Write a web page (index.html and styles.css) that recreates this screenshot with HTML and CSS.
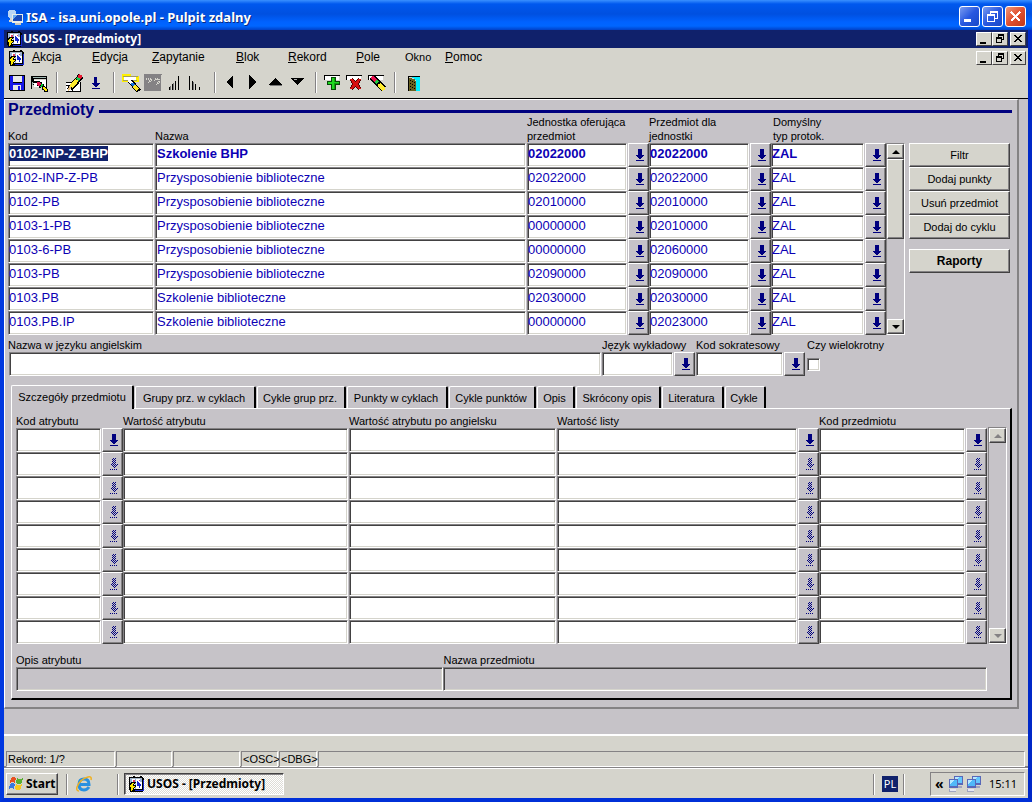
FILE: index.html
```html
<!DOCTYPE html>
<html lang="pl">
<head>
<meta charset="utf-8">
<title>USOS - [Przedmioty]</title>
<link rel="stylesheet" href="styles.css">
<script src="script.js" defer></script>
</head>
<body>
<svg class="defs" aria-hidden="true">
  <defs>
    <pattern id="dots" width="2" height="2" patternUnits="userSpaceOnUse"><path fill="#00007f" d="M0 0h1v1H0zM1 1h1v1H1z"/></pattern>
    <symbol id="list" viewBox="0 0 9 12"><path fill="#00007f" d="M3 0h4v6h2v1H8v1H7v1H6v1H4V9H3V8H2V7H1V6h2zM1 11h8v1H1z"/></symbol>
    <symbol id="list-off" viewBox="0 0 9 12"><path fill="url(#dots)" d="M3 0h4v6h2v1H8v1H7v1H6v1H4V9H3V8H2V7H1V6h2zM1 11h8v1H1z"/></symbol>
    <symbol id="usos" viewBox="0 0 16 16">
      <path fill="#000" d="M1 1h4V0h2v1h5V0h2v1h1v1h1v13h-1v1H5v-2H1z"/><path fill="#a5b6c8" d="M2 2h12v1H2z"/><path fill="#fff" d="M2 3h12v10H2z"/><path fill="#98b0d8" d="M7 3h1v10H7zM2 3h2v4H2zM12 3h2v3h-2z"/><path fill="#1828d0" d="M9 5h1v1h1v1h1v1h1v2h-1v2h-1v-2H9zM15 4h1v11H7v-1h8z"/><path fill="#e04060" d="M5 4h2v2H5zM11 4h1v1h-1z"/><path fill="#000" d="M3 6h5v1H7v1H6v1h2v2H7v1H6v2H5v2H2v-4H1V9h1V7h1z"/><path fill="#ffe800" d="M4 7h2v1H5v2h2v1H6v1H5v2H4v1H3v-4H2V9h1V8h1z"/>
    </symbol>
    <symbol id="min" viewBox="0 0 14 12"><path d="M3 9h6v2H3z"/></symbol>
    <symbol id="restore" viewBox="0 0 14 12"><path fill-rule="evenodd" d="M5 1h6v6H9v3H3V4h2zm1 2v1h3v2h1V3zM4 6v3h4V6z"/></symbol>
    <symbol id="close" viewBox="0 0 14 12"><path d="M3 2h2v1h1v1h2V3h1V2h2v1h-1v1H9v1H8v1h1v1h1v1h1v1H9V8H8V7H6v1H5v1H3V8h1V7h1V6h1V5H5V4H4V3H3z"/></symbol>
    <symbol id="net" viewBox="0 0 16 16"><path fill="#5868b8" d="M6 0h9v9H6z"/><path fill="#62c6ff" d="M7 1h7v6H7z"/><path fill="#b8e8ff" d="M7 1h4L7 5z"/><path fill="#a0a4c0" d="M8 10h6v2H8zM1 13h7v3H1z"/><path fill="#5868b8" d="M1 3h9v9H1z"/><path fill="#50b8f8" d="M2 4h7v6H2z"/><path fill="#b8e8ff" d="M2 4h4L2 8z"/><path fill="#e8e8f4" d="M2 13h6v2H2z"/></symbol>
    <symbol id="field" viewBox="0 0 20 18"><path fill="#000" d="M1 1h16v1H2v4H1z"/><path fill="#fff" d="M2 2h14v4H2z"/></symbol>
  </defs>
</svg>
<div class="window">
  <header class="rdp-bar">
    <svg class="i16" viewBox="0 0 16 16"><circle cx="5" cy="5" r="4.500" fill="#b8d4f4"/><path fill="#d8d8d0" d="M3 9h5v4H2z"/><path fill="#e8ece8" d="M5 5h11v9H5z"/><path fill="#1848b8" d="M6 6h9v6H6z"/><path fill="#68a8f0" d="M6 6h5L6 10z"/><path fill="#c8c8c0" d="M8 14h6v2H8z"/></svg>
    <span class="rdp-title">ISA - isa.uni.opole.pl - Pulpit zdalny</span>
    <button class="xp" aria-label="Minimalizuj pulpit"><svg viewBox="0 0 19 19"><path fill="#fff" d="M4 12h7v3H4z"/></svg></button>
    <button class="xp" aria-label="Przywróć pulpit"><svg viewBox="0 0 19 19"><path fill="#fff" fill-rule="evenodd" d="M7 4h8v8h-3v3H4V7h3zm1 2v1h4v4h2V6zM5 9v5h6V9z"/></svg></button>
    <button class="xp xp-close" aria-label="Zamknij pulpit"><svg viewBox="0 0 19 19"><path stroke="#fff" stroke-width="2.400" d="M5 5l9 9M14 5l-9 9"/></svg></button>
  </header>
  <div class="app-bar">
    <svg class="i16"><use href="#usos"/></svg>
    <span class="app-title">USOS - [Przedmioty]</span>
    <button class="wc" aria-label="Minimalizuj"><svg><use href="#min"/></svg></button><button class="wc" aria-label="Przywróć"><svg><use href="#restore"/></svg></button><button class="wc wc-close" aria-label="Zamknij"><svg><use href="#close"/></svg></button>
  </div>
  <div class="menu-row">
    <svg class="i16"><use href="#usos"/></svg>
    <nav class="menu">
      <button><u>A</u>kcja</button><button><u>E</u>dycja</button><button><u>Z</u>apytanie</button><button><u>B</u>lok</button><button><u>R</u>ekord</button><button><u>P</u>ole</button><button class="menu-sub">Okno</button><button><u>P</u>omoc</button>
    </nav>
    <button class="wc" aria-label="Minimalizuj formularz"><svg><use href="#min"/></svg></button><button class="wc" aria-label="Przywróć formularz"><svg><use href="#restore"/></svg></button><button class="wc wc-close" aria-label="Zamknij formularz"><svg><use href="#close"/></svg></button>
  </div>
  <div class="toolbar">
    <button aria-label="Zapisz"><svg viewBox="0 0 20 18"><path d="M2 1h16v16H3l-1-1z"/><path fill="#1818e8" d="M3 2h3v7h9V2h2v14H3z"/><path fill="#e8e8e8" d="M6 2h9v6H6zM6 11h8v5H6z"/><path fill="#1818e8" d="M11 12h2v4h-2z"/></svg></button>
    <button aria-label="Wyświetl"><svg viewBox="0 0 20 18"><path d="M2 2h16v12h-1V5H5v2h3v1H4v2h2v1H3v4H2z"/><path fill="#a0b8b0" d="M4 3h13v1H4zM3 8h1v3H3z"/><path fill="#fff" d="M5 6h12v7H5z"/><path d="M4 7h7v1h2v2h2v2h-3v2h-2v-2H8V9H4z"/><path fill="#e01050" d="M8 8h3v1h1v2h-1v1H9v-1H8z"/><path fill="#00c030" d="M12 10h2v3h-3v-1h1z"/><path fill="#000" d="M13 12h3v1h2v2h1v3h-4v-2h-2z"/><path fill="#ffe800" d="M14 13h2v1h1v1h1v2h-2v-1h-1v-1h-1z"/></svg></button>
    <i class="sep"></i>
    <button aria-label="Edytuj"><svg viewBox="0 0 20 18"><path fill="#fff" d="M2 8h15v9H2z"/><path d="M2 8h6v1H2zM2 11h4v1H2zM3 14h4v1H3zM2 17h15v1H2zM16 8h1v9h-1z"/><path stroke="#000" stroke-width="6" d="M6 15L17 2"/><path stroke="#ffec30" stroke-width="4" d="M7 13l6-7"/><path stroke="#18c850" stroke-width="4" d="M13 6l2-2"/><path stroke="#e81830" stroke-width="4" d="M15 4l2-3"/><path fill="#e8c080" d="M5 12l3 2-4 3z"/></svg></button>
    <button aria-label="Lista wartości"><svg viewBox="0 0 20 18"><path fill="#00007f" d="M8 3h3v6h3l-4 4H9L5 9h3zM6 14h8v1H6z"/></svg></button>
    <i class="sep"></i>
    <button aria-label="Wprowadź zapytanie"><svg viewBox="0 0 20 18"><path fill="#fff000" d="M1 0h9v2h8v6H1z"/><path fill="#a09c60" d="M2 2h15v1H2zM2 6h14v1H2z"/><path fill="#fff" d="M3 3h12v3H3z"/><path stroke="#000" stroke-width="5" d="M9 7l9 10"/><path stroke="#fff" stroke-width="3" d="M8 6l3 4"/><path stroke="#1070e0" stroke-width="3" d="M11 9l2 3"/><path stroke="#ffe820" stroke-width="3" d="M13 12l4 4"/></svg></button>
    <button aria-label="Wykonaj zapytanie" disabled><svg viewBox="0 0 20 18"><path fill="#848284" d="M1 0h18v18H1z"/><path fill="#d5d4cc" d="M18 1h1v17H1v-1h17z"/><path fill="none" stroke="#d5d4cc" stroke-dasharray="1 1" stroke-width="2" d="M3 5h6M5 9l4-4M11 7l2-2h3v3l-3 3"/></svg></button>
    <button aria-label="Sortuj rosnąco"><svg viewBox="0 0 20 18"><path d="M4 13h1v3H4zM7 10h1v6H7zM10 7h1v9h-1zM13 2h1v14h-1z"/><path fill="#777" d="M5 12h1v4H5zM8 9h1v7H8z"/></svg></button>
    <button aria-label="Sortuj malejąco"><svg viewBox="0 0 20 18"><path d="M2 2h1v14H2zM5 7h1v9H5zM8 10h1v6H8zM12 13h1v3h-1z"/><path fill="#777" d="M6 8h1v8H6z"/></svg></button>
    <i class="sep"></i>
    <button aria-label="Poprzedni blok"><svg viewBox="0 0 20 18"><path d="M4 8l7-7v14z"/></svg></button>
    <button aria-label="Następny blok"><svg viewBox="0 0 20 18"><path d="M12 8L5 1v14z"/></svg></button>
    <button aria-label="Poprzedni rekord"><svg viewBox="0 0 20 18"><path d="M2 11l7-7 7 7z"/><path fill="#777" d="M4 11h12v1H4z"/></svg></button>
    <button aria-label="Następny rekord"><svg viewBox="0 0 20 18"><path d="M2 4h14l-7 7z"/><path fill="#aaa" d="M5 5h6l-5 1z"/></svg></button>
    <i class="sep"></i>
    <button aria-label="Wstaw rekord"><svg viewBox="0 0 20 18"><use href="#field"/><path fill="#084808" d="M8 3h5v4h4v4h-4v5H8v-5H4V7h4z"/><path fill="#20d820" d="M9 4h2v4h5v1h-5v6H9v-5H5V8h4z"/><path fill="#10a010" d="M11 4h1v4h-1zM11 9h5v1h-4v5h-1z"/></svg></button>
    <button aria-label="Usuń rekord"><svg viewBox="0 0 20 18"><use href="#field"/><path stroke="#500" stroke-width="4" d="M6 5l9 10M15 5L6 15"/><path stroke="#d81010" stroke-width="2.500" d="M6 5l9 10M15 5L6 15"/></svg></button>
    <button aria-label="Wyczyść rekord"><svg viewBox="0 0 20 18"><use href="#field"/><path stroke="#000" stroke-width="6" d="M5 3l12 12"/><path stroke="#e81050" stroke-width="4" d="M5 3l4 4"/><path stroke="#20c840" stroke-width="4" d="M9 7l2 2"/><path stroke="#ffec30" stroke-width="4" d="M12 10l5 6"/></svg></button>
    <i class="sep"></i>
    <button aria-label="Wyjście"><svg viewBox="0 0 20 18"><path d="M6 2h12v1H7v14H6z"/><path fill="#00eeff" d="M10 3h8v14h-4V6h-2V4h-2z"/><path fill="#686020" d="M7 4h3v1h3v2h1v10H7z"/><path d="M8 6h1v1H8zM10 7h1v1h-1zM12 8h1v1h-1zM8 9h1v1H8zM10 10h1v1h-1zM12 11h1v1h-1zM8 12h1v1H8zM10 13h1v1h-1zM12 14h1v1h-1zM8 15h1v1H8z"/></svg></button>
  </div>

  <main class="workspace">
    <div class="canvas">
      <h1>Przedmioty</h1>
      <section class="courses">
        <table class="grid course-grid">
          <colgroup><col class="c-code"><col><col class="c-unit"><col class="c-btn"><col class="c-unit"><col class="c-btn"><col class="c-type"><col class="c-btn"></colgroup>
          <thead><tr><th>Kod</th><th>Nazwa</th><th colspan="2">Jednostka oferująca<br>przedmiot</th><th colspan="2">Przedmiot dla<br>jednostki</th><th class="type" colspan="2">Domyślny<br>typ protok.</th></tr></thead>
          <tbody id="courses"></tbody>
        </table>
        <div class="scroll scroll-main"><button class="up" aria-label="W górę"></button><div class="thumb"></div><div class="track"></div><button class="down" aria-label="W dół"></button></div>
        <div class="actions"><button>Filtr</button><button>Dodaj punkty</button><button>Usuń przedmiot</button><button>Dodaj do cyklu</button><button class="reports">Raporty</button></div>
      </section>

      <section class="extra">
        <div class="ex ex-name"><label for="en">Nazwa w języku angielskim</label><div class="line"><input class="field" id="en"></div></div>
        <div class="ex ex-lang"><label for="lang">Język wykładowy</label><div class="line"><input class="field" id="lang"><button class="lov" aria-label="Lista języków"><svg><use href="#list"/></svg></button></div></div>
        <div class="ex ex-soc"><label for="soc">Kod sokratesowy</label><div class="line"><input class="field" id="soc"><button class="lov" aria-label="Lista kodów"><svg><use href="#list"/></svg></button></div></div>
        <div class="ex ex-multi"><label for="multi">Czy wielokrotny</label><div class="line"><input type="checkbox" id="multi"></div></div>
      </section>

      <div class="tabs" role="tablist">
        <button role="tab" class="active" aria-selected="true">Szczegóły przedmiotu</button><button role="tab">Grupy prz. w cyklach</button><button role="tab">Cykle grup prz.</button><button role="tab">Punkty w cyklach</button><button role="tab">Cykle punktów</button><button role="tab">Opis</button><button role="tab">Skrócony opis</button><button role="tab">Literatura</button><button role="tab">Cykle</button>
      </div>
      <section class="panel">
        <div class="attrs">
          <table class="grid">
            <colgroup><col class="a-code"><col class="c-btn"><col class="a-val"><col class="a-eng"><col><col class="c-btn"><col class="c-code"><col class="c-btn"></colgroup>
            <thead><tr><th colspan="2">Kod atrybutu</th><th>Wartość atrybutu</th><th>Wartość atrybutu po angielsku</th><th colspan="2">Wartość listy</th><th colspan="2">Kod przedmiotu</th></tr></thead>
            <tbody id="attrs"></tbody>
          </table>
          <div class="scroll scroll-attrs"><button class="up" aria-label="W górę" disabled></button><div class="track"></div><button class="down" aria-label="W dół" disabled></button></div>
        </div>
        <div class="descr">
          <div><label for="d1">Opis atrybutu</label><input class="field" id="d1" readonly></div>
          <div><label for="d2">Nazwa przedmiotu</label><input class="field" id="d2" readonly></div>
        </div>
      </section>
    </div>
  </main>

  <div class="status"><span>Rekord: 1/?</span><span></span><span></span><span>&lt;OSC&gt;</span><span>&lt;DBG&gt;</span><span></span></div>
  <footer class="taskbar">
    <button class="start"><svg class="i16" viewBox="0 0 16 16"><path fill="#e85020" d="M3 2q3-2 5 0L7 7Q5 5 2 7z"/><path fill="#58b030" d="M9 2q3 2 6 0l-1 5q-3 2-6 0z"/><path fill="#3878e0" d="M2 8q3-2 5 0l-1 5q-2-2-5 0z"/><path fill="#f8c820" d="M8 8q3 2 6 0l-1 5q-3 2-6 0z"/></svg>Start</button>
    <i class="sep"></i>
    <button class="ie" aria-label="Internet Explorer"><svg class="i16 smooth" viewBox="0 0 16 16"><path fill="none" stroke="#2890e0" stroke-width="3" d="M13 11q-2 3-5 3-5 0-5-5.500T8 3q5 0 5 5.500H4"/><path fill="none" stroke="#f0b020" stroke-width="1.500" d="M3 15q-3 0-2-4Q4 3 12 1q4-1 3 3"/></svg></button>
    <i class="sep"></i>
    <button class="task"><svg class="i16"><use href="#usos"/></svg>USOS - [Przedmioty]</button>
    <i class="sep tray-sep"></i>
    <span class="lang">PL</span>
    <i class="sep"></i>
    <div class="tray"><span class="more">«</span><svg class="i16"><use href="#net"/></svg><svg class="i16"><use href="#net"/></svg><time>15:11</time></div>
  </footer>
</div>
</body>
</html>
```

FILE: styles.css
```css
* { box-sizing: border-box; }
:root { --face: #d5d4cc; --form: #c6c3c8; --gray: #848284; --dark: #424142; --navy: #00007f; }
body { margin: 0; font: 11px/14px "Liberation Sans", Arial, sans-serif; color: #000; }
button, input { font: inherit; color: inherit; margin: 0; padding: 0; border: 0; border-radius: 0; background: none; outline: 0; min-width: 0; }
svg { display: block; fill: #000; shape-rendering: crispEdges; flex: none; }
.defs { position: absolute; width: 0; height: 0; }
.i16 { width: 16px; height: 16px; }
.smooth { shape-rendering: auto; }
.window { min-height: 100vh; display: flex; flex-direction: column; background: var(--face); border: solid; border-width: 0 4px 4px; border-color: #0038e0 #0028c8 #0030d8 #0038e0; }

.rdp-bar { height: 30px; margin: 0 -4px; padding: 3px 6px 0 7px; display: flex; align-items: center; gap: 2px; background: linear-gradient(#3a90ff, #0058ee 4px, #0050e0 14px, #0062ff 22px, #0066ff 26px, #0040c8); }
.rdp-title { flex: 1; padding-left: 1px; font: bold 13px/18px "Noto Sans", sans-serif; color: #fff; text-shadow: 1px 1px #0a2a80; white-space: nowrap; }
.xp { width: 21px; height: 21px; border: 1px solid #fff; border-radius: 3px; background: linear-gradient(135deg, #7a9cf0, #2858e0 50%, #1848c8); }
.xp svg { width: 19px; height: 19px; }
.xp-close { background: linear-gradient(135deg, #f09878, #e05030 50%, #c03818); }

.app-bar { height: 18px; padding: 0 2px; display: flex; align-items: center; background: #10216b; color: #fff; }
.app-title { flex: 1; padding-left: 1px; font: bold 12px/16px "Noto Sans", sans-serif; white-space: nowrap; }
.wc { width: 16px; height: 14px; background: var(--face); border: 1px solid; border-color: #fff var(--dark) var(--dark) #fff; }
.wc svg { width: 14px; height: 12px; }
.wc-close { margin-left: 2px; }
.menu-row { height: 21px; padding: 0 2px 2px; display: flex; align-items: center; }
.menu { flex: 1; padding: 0 0 2px 8px; display: grid; grid-template-columns: 60px 60px 84px 52px 68px 49px 40px 40px; font-size: 12px; }
.menu button { text-align: left; }
.menu .menu-sub { font-size: 11px; }
.menu-row .i16 { margin-left: 2px; }

.toolbar { height: 30px; padding: 0 2px 2px; display: flex; align-items: center; border-bottom: 1px solid #000; }
.toolbar button { width: 22px; padding-left: 1px; }
.toolbar svg { width: 20px; height: 18px; }
.sep { flex: none; width: 2px; height: 21px; margin: 0 5px 0 6px; background: linear-gradient(90deg, var(--gray) 50%, #fff 50%); }

.workspace { flex: 1; background: var(--form); border-bottom: 2px solid #fff; }
.canvas { margin: 0 9px 25px 0; padding: 0 5px 7px 3px; border: solid; border-width: 1px 2px 2px 1px; border-color: #fff var(--gray) var(--gray) #fff; }
h1 { margin: 0 0 -5px; display: flex; align-items: center; gap: 5px; font-size: 16px; line-height: 20px; color: var(--navy); }
h1::after { content: ""; flex: 1; height: 3px; margin-top: 3px; background: var(--navy); }

.courses { display: flex; }
.grid { flex: 1; table-layout: fixed; border-collapse: collapse; width: 100%; }
.grid th { padding: 0; height: 14px; text-align: left; vertical-align: bottom; font-weight: normal; white-space: nowrap; }
.grid .type { padding-left: 2px; }
.grid td { padding: 0 1px 0 0; height: 24px; }
.grid td.b { padding: 0; }
.c-code { width: 147px; } .c-unit { width: 101px; } .c-btn { width: 21px; } .c-type { width: 94px; }
.a-code { width: 86px; } .a-val { width: 226px; } .a-eng { width: 208px; }
.field { display: block; width: 100%; height: 24px; background: #fff; border: 1px solid; border-color: var(--gray) #fff #fff var(--gray); box-shadow: inset 1px 1px var(--dark), inset -1px -1px var(--face); }
.field[readonly] { background: var(--form); }
.course-grid .field { font-size: 13px; color: #0c00b4; padding-bottom: 3px; }
.course-grid td:nth-child(2) .field { padding-left: 1px; }
.course-grid tr:first-child .field { font-weight: bold; }
.field::selection { background: #10216b; color: #fff; }
.lov { display: flex; align-items: center; justify-content: center; flex: none; width: 21px; height: 24px; padding-left: 2px; background: var(--form); border: 1px solid; border-color: #fff var(--dark) var(--dark) #fff; box-shadow: inset -1px -1px var(--gray); }
.lov svg { width: 9px; height: 12px; }

.scroll { flex: none; width: 19px; display: flex; flex-direction: column; border: 1px solid; border-color: var(--gray) #fff #fff var(--gray); }
.scroll-main { margin-top: 28px; }
.scroll-attrs { margin: 13px 0 0 1px; }
.scroll button, .thumb { display: flex; align-items: center; justify-content: center; background: var(--face); border: 1px solid; border-color: #fff var(--dark) var(--dark) #fff; box-shadow: inset -1px -1px var(--gray); }
.scroll button { height: 15px; }
.scroll button::before { content: ""; border: solid transparent; border-width: 0 4px 4px; border-bottom-color: #000; }
.scroll .down::before { border-width: 4px 4px 0; border-top-color: #000; }
.scroll button:disabled::before { border-bottom-color: var(--gray); border-top-color: var(--gray); }
.thumb { height: 80px; }
.track { flex: 1; }

.actions { flex: none; width: 101px; margin: 28px 2px 0 4px; }
.actions button { display: block; width: 100%; height: 24px; background: var(--face); border: 1px solid; border-color: #fff var(--dark) var(--dark) #fff; box-shadow: inset -1px -1px var(--gray); }
.actions .reports { margin-top: 10px; font-size: 12px; font-weight: bold; }

.extra { display: flex; padding-top: 3px; }
.ex label { display: block; white-space: nowrap; }
.line { display: flex; align-items: center; gap: 1px; height: 24px; }
.ex-name { flex: 1; padding-right: 1px; }
.ex-name .line { padding-left: 1px; }
.ex-lang { width: 94px; padding-right: 1px; }
.ex-soc { width: 109px; }
.ex-multi { width: 207px; padding-left: 2px; }
input[type="checkbox"] { appearance: none; width: 13px; height: 13px; background: #fff; border: 1px solid; border-color: var(--gray) #fff #fff var(--gray); box-shadow: inset 1px 1px var(--dark), inset -1px -1px var(--face); }

.tabs { display: grid; grid-template-columns: 124px 122px 90px 102px 88px 39px 86px 63px 42px; align-items: end; padding: 9px 0 0 3px; }
.tabs button { height: 22px; margin-right: 1px; padding-right: 2px; white-space: nowrap; border: solid; border-width: 1px 2px 0 1px; border-color: #fff #000 #000 #fff; border-radius: 2px 2px 0 0; }
.tabs .active { position: relative; height: 24px; margin: 0 1px -1px 0; padding: 0 0 1px; background: var(--form); }
.panel { margin-left: 3px; padding: 5px 3px 7px 4px; border: solid; border-width: 1px 2px 2px 1px; border-color: #fff #000 #000 #fff; }
.attrs { display: flex; }
.descr { display: grid; grid-template-columns: 427fr 543fr; padding: 9px 20px 0 0; }
.descr .field { width: 100%; }

.status { height: 32px; padding: 15px 3px 0 2px; display: grid; grid-template-columns: 109px 56px 67px 37px 38px 1fr; gap: 1px; border-bottom: 2px solid var(--gray); }
.status span { padding-left: 1px; white-space: nowrap; border: 1px solid; border-color: var(--gray) #fff #fff var(--gray); }
.taskbar { height: 30px; padding: 1px 3px 0 2px; display: flex; align-items: center; border-top: 1px solid #fff; font: bold 12px/16px "Noto Sans", sans-serif; }
.start { display: flex; align-items: center; gap: 2px; width: 52px; height: 22px; padding-left: 1px; border: 1px solid; border-color: #fff var(--dark) var(--dark) #fff; box-shadow: inset -1px -1px var(--gray); }
.taskbar .sep { margin-left: 8px; }
.ie { width: 36px; padding-left: 3px; }
.task { display: flex; align-items: center; gap: 3px; width: 160px; height: 22px; padding-left: 3px; white-space: nowrap; border: 1px solid; border-color: var(--dark) #fff #fff var(--dark); box-shadow: inset 1px 1px var(--gray); background: repeating-conic-gradient(#fff 0 25%, #dddcd6 0 50%) 0 0 / 2px 2px; }
.taskbar .tray-sep { margin-left: auto; margin-right: 7px; }
.lang { width: 16px; height: 16px; font-size: 11px; text-align: center; background: #10216b; color: #fff; font-weight: normal; }
.lang + .sep { margin: 0 25px 0 5px; }
.tray { display: flex; align-items: center; gap: 2px; width: 95px; height: 24px; padding-left: 4px; border: 1px solid; border-color: var(--gray) #fff #fff var(--gray); font-size: 11px; font-weight: normal; }
.tray .more { width: 11px; font-weight: bold; font-size: 14px; }
.tray time { margin-left: 5px; }
```

FILE: script.js
```js
const courses = [
  ["0102-INP-Z-BHP", "Szkolenie BHP", "02022000", "02022000"],
  ["0102-INP-Z-PB", "Przysposobienie biblioteczne", "02022000", "02022000"],
  ["0102-PB", "Przysposobienie biblioteczne", "02010000", "02010000"],
  ["0103-1-PB", "Przysposobienie biblioteczne", "00000000", "02010000"],
  ["0103-6-PB", "Przysposobienie biblioteczne", "00000000", "02060000"],
  ["0103-PB", "Przysposobienie biblioteczne", "02090000", "02090000"],
  ["0103.PB", "Szkolenie biblioteczne", "02030000", "02030000"],
  ["0103.PB.IP", "Szkolenie biblioteczne", "00000000", "02023000"],
];
const field = (label, value = "") =>
  `<td><input class="field" aria-label="${label}" value="${value}"></td>`;
const lov = (off) =>
  `<td class="b"><button class="lov" aria-label="Lista wartości"${off ? " disabled" : ""}><svg><use href="#list${off ? "-off" : ""}"/></svg></button></td>`;

document.getElementById("courses").innerHTML = courses.map(([code, name, unit, target]) =>
  `<tr>${field("Kod", code)}${field("Nazwa", name)}${field("Jednostka oferująca przedmiot", unit)}${lov()}${field("Przedmiot dla jednostki", target)}${lov()}${field("Domyślny typ protokołu", "ZAL")}${lov()}</tr>`
).join("");

document.getElementById("attrs").innerHTML = Array.from({ length: 9 }, (_, i) =>
  `<tr>${field("Kod atrybutu")}${lov(i)}${field("Wartość atrybutu")}${field("Wartość atrybutu po angielsku")}${field("Wartość listy")}${lov(i)}${field("Kod przedmiotu")}${lov(i)}</tr>`
).join("");

const current = document.querySelector("#courses input");
current.focus();
current.select();
```
